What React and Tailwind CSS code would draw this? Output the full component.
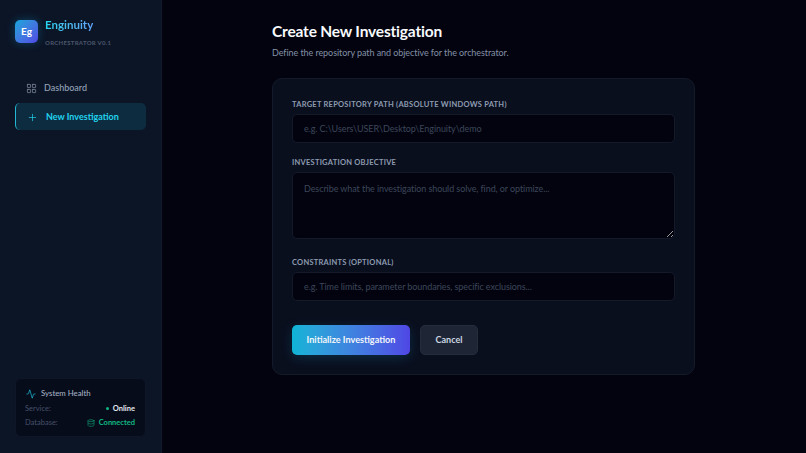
import React from "react";
import { LayoutGrid, Plus, Activity, Database } from "lucide-react";

const Field = ({ label, placeholder, className = "" }) => (
  <div className={className}>
    <label className="block text-[7.5px] leading-[11px] font-bold tracking-[0.25px] uppercase text-[#8d9bb0] mb-[4px]">
      {label}
    </label>
    <input
      readOnly
      placeholder={placeholder}
      className="block w-full h-[29px] px-[11px] text-[9px] tracking-[-0.08px] text-white bg-[#02030f] border border-[#141a2a] rounded-[5px] outline-none placeholder:text-[#3d4659]"
    />
  </div>
);

const App = () => {
  return (
    <div className="flex h-screen w-full overflow-hidden bg-[#02030f] font-['Lato',sans-serif]">
      {/* Sidebar */}
      <aside className="flex flex-col justify-between w-[162px] shrink-0 bg-[#0c1526] border-r border-[#111a2c] pl-[15px] pr-[15px] pt-[19px] pb-[16px]">
        <div>
          <div className="flex items-start gap-[7px]">
            <div className="flex items-center justify-center w-[23px] h-[23px] mt-[1px] rounded-[5px] bg-gradient-to-br from-[#0ea5d9] to-[#4f46e5] text-white text-[10px] font-bold shadow-[0_0_10px_rgba(14,165,233,0.3)]">
              Eg
            </div>
            <div>
              <div className="text-[11.5px] leading-[12px] font-bold text-transparent bg-clip-text bg-gradient-to-r from-[#22d3ee] to-[#60a5fa] w-fit">
                Enginuity
              </div>
              <div className="text-[6px] leading-[8px] mt-[8px] font-bold tracking-[0.3px] text-[#4b566c]">
                ORCHESTRATOR V0.1
              </div>
            </div>
          </div>

          <nav className="mt-[27px] flex flex-col gap-[2px]">
            <a className="flex items-center gap-[7px] h-[27px] pt-[1px] pl-[11px] text-[9px] font-medium text-[#94a3b8]">
              <LayoutGrid size={11} strokeWidth={1.5} className="text-[#8a96aa]" />
              Dashboard
            </a>
            <a className="flex items-center gap-[8px] h-[27px] pt-[1px] pl-[11px] text-[9px] font-bold text-[#22d3ee] bg-[#0d2c40] border-l border-[#22b8d6] rounded-[5px]">
              <Plus size={11} strokeWidth={1.5} />
              New Investigation
            </a>
          </nav>
        </div>

        <div className="h-[59px] pl-[9px] pr-[10px] pt-[9px] bg-[#070c1b] border border-[#0f1627] rounded-[6px]">
          <div className="flex items-center gap-[5px] text-[7.8px] leading-[11px] font-medium text-[#a3afc2]">
            <Activity size={10} strokeWidth={1.5} className="ml-[1px] text-[#22d3ee]" />
            System Health
          </div>
          <div className="flex items-center justify-between mt-[4px] text-[7.5px] leading-[11px]">
            <span className="text-[#46516a]">Service:</span>
            <span className="flex items-center gap-[4px] font-bold text-[#e2e8f0]">
              <span className="w-[3px] h-[3px] rounded-full bg-[#10b981]" />
              Online
            </span>
          </div>
          <div className="flex items-center justify-between mt-[3px] text-[7.5px] leading-[11px]">
            <span className="text-[#46516a]">Database:</span>
            <span className="flex items-center gap-[4px] font-bold text-[#10b981]">
              <Database size={8} strokeWidth={1.5} />
              Connected
            </span>
          </div>
        </div>
      </aside>

      {/* Main */}
      <main className="flex-1 pt-[21px] pl-[110px]">
        <div className="w-[423px]">
          <h1 className="text-[15.5px] leading-[20px] tracking-[-0.18px] font-bold text-[#f8fafc]">Create New Investigation</h1>
          <p className="text-[9px] leading-[13px] tracking-[-0.07px] mt-[5px] text-[#8290a6]">
            Define the repository path and objective for the orchestrator.
          </p>

          <form className="mt-[19px] h-[297px] px-[19px] pt-[20px] bg-[#0a0f1e] border border-[#141a2a] rounded-[10px]">
            <Field
              label="Target Repository Path (Absolute Windows Path)"
              placeholder="e.g. C:\Users\USER\Desktop\Enginuity\demo"
            />

            <div className="mt-[14px]">
              <label className="block text-[7.5px] leading-[11px] font-bold tracking-[0.25px] uppercase text-[#8d9bb0] mb-[4px]">
                Investigation Objective
              </label>
              <textarea
                readOnly
                placeholder="Describe what the investigation should solve, find, or optimize..."
                className="block w-full h-[67px] px-[11px] py-[9px] text-[9px] tracking-[-0.08px] leading-[13px] text-white bg-[#02030f] border border-[#141a2a] rounded-[5px] outline-none placeholder:text-[#3d4659]"
              />
            </div>

            <Field
              className="mt-[18px]"
              label="Constraints (Optional)"
              placeholder="e.g. Time limits, parameter boundaries, specific exclusions..."
            />

            <div className="flex gap-[10px] mt-[24px]">
              <button
                type="button"
                className="w-[118px] h-[30px] rounded-[5px] text-[9.1px] font-bold text-[#f1f5f9] bg-gradient-to-r from-[#0db4d6] to-[#4f46e5] shadow-[0_3px_12px_rgba(14,165,233,0.18)]"
              >
                Initialize Investigation
              </button>
              <button
                type="button"
                className="w-[58px] h-[30px] rounded-[5px] text-[9px] font-bold text-[#cbd5e1] bg-[#1e2635] border border-[#252d3d]"
              >
                Cancel
              </button>
            </div>
          </form>
        </div>
      </main>
    </div>
  );
};

export default App;
